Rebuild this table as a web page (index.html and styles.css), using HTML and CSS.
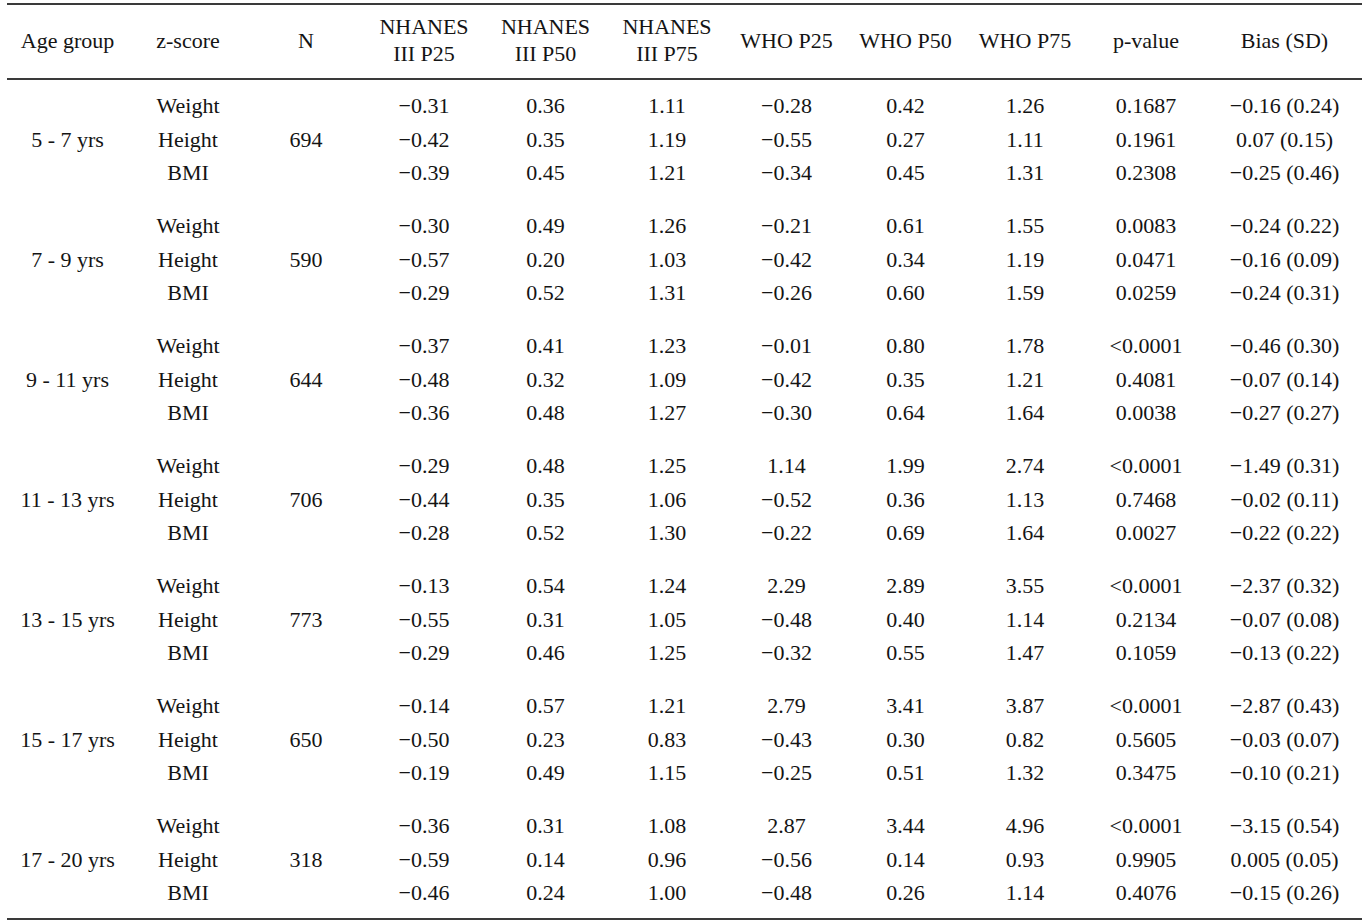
FILE: index.html
```html
<!DOCTYPE html>
<html>
<head>
<meta charset="utf-8">
<link rel="stylesheet" href="styles.css">
</head>
<body>
<table class="data">
<colgroup>
<col class="c1"><col class="c2"><col class="c3"><col class="c4"><col class="c5"><col class="c6"><col class="c7"><col class="c8"><col class="c9"><col class="c10"><col class="c11">
</colgroup>
<thead>
<tr>
<th>Age group</th><th>z-score</th><th>N</th><th>NHANES<br>III P25</th><th>NHANES<br>III P50</th><th>NHANES<br>III P75</th><th>WHO P25</th><th>WHO P50</th><th>WHO P75</th><th>p-value</th><th>Bias (SD)</th>
</tr>
</thead>
<tbody>
<tr class="first top"><td></td><td>Weight</td><td></td><td>−0.31</td><td>0.36</td><td>1.11</td><td>−0.28</td><td>0.42</td><td>1.26</td><td>0.1687</td><td>−0.16 (0.24)</td></tr>
<tr><td>5 - 7 yrs</td><td>Height</td><td>694</td><td>−0.42</td><td>0.35</td><td>1.19</td><td>−0.55</td><td>0.27</td><td>1.11</td><td>0.1961</td><td>0.07 (0.15)</td></tr>
<tr><td></td><td>BMI</td><td></td><td>−0.39</td><td>0.45</td><td>1.21</td><td>−0.34</td><td>0.45</td><td>1.31</td><td>0.2308</td><td>−0.25 (0.46)</td></tr>

<tr class="first"><td></td><td>Weight</td><td></td><td>−0.30</td><td>0.49</td><td>1.26</td><td>−0.21</td><td>0.61</td><td>1.55</td><td>0.0083</td><td>−0.24 (0.22)</td></tr>
<tr><td>7 - 9 yrs</td><td>Height</td><td>590</td><td>−0.57</td><td>0.20</td><td>1.03</td><td>−0.42</td><td>0.34</td><td>1.19</td><td>0.0471</td><td>−0.16 (0.09)</td></tr>
<tr><td></td><td>BMI</td><td></td><td>−0.29</td><td>0.52</td><td>1.31</td><td>−0.26</td><td>0.60</td><td>1.59</td><td>0.0259</td><td>−0.24 (0.31)</td></tr>

<tr class="first"><td></td><td>Weight</td><td></td><td>−0.37</td><td>0.41</td><td>1.23</td><td>−0.01</td><td>0.80</td><td>1.78</td><td>&lt;0.0001</td><td>−0.46 (0.30)</td></tr>
<tr><td>9 - 11 yrs</td><td>Height</td><td>644</td><td>−0.48</td><td>0.32</td><td>1.09</td><td>−0.42</td><td>0.35</td><td>1.21</td><td>0.4081</td><td>−0.07 (0.14)</td></tr>
<tr><td></td><td>BMI</td><td></td><td>−0.36</td><td>0.48</td><td>1.27</td><td>−0.30</td><td>0.64</td><td>1.64</td><td>0.0038</td><td>−0.27 (0.27)</td></tr>

<tr class="first"><td></td><td>Weight</td><td></td><td>−0.29</td><td>0.48</td><td>1.25</td><td>1.14</td><td>1.99</td><td>2.74</td><td>&lt;0.0001</td><td>−1.49 (0.31)</td></tr>
<tr><td>11 - 13 yrs</td><td>Height</td><td>706</td><td>−0.44</td><td>0.35</td><td>1.06</td><td>−0.52</td><td>0.36</td><td>1.13</td><td>0.7468</td><td>−0.02 (0.11)</td></tr>
<tr><td></td><td>BMI</td><td></td><td>−0.28</td><td>0.52</td><td>1.30</td><td>−0.22</td><td>0.69</td><td>1.64</td><td>0.0027</td><td>−0.22 (0.22)</td></tr>

<tr class="first"><td></td><td>Weight</td><td></td><td>−0.13</td><td>0.54</td><td>1.24</td><td>2.29</td><td>2.89</td><td>3.55</td><td>&lt;0.0001</td><td>−2.37 (0.32)</td></tr>
<tr><td>13 - 15 yrs</td><td>Height</td><td>773</td><td>−0.55</td><td>0.31</td><td>1.05</td><td>−0.48</td><td>0.40</td><td>1.14</td><td>0.2134</td><td>−0.07 (0.08)</td></tr>
<tr><td></td><td>BMI</td><td></td><td>−0.29</td><td>0.46</td><td>1.25</td><td>−0.32</td><td>0.55</td><td>1.47</td><td>0.1059</td><td>−0.13 (0.22)</td></tr>

<tr class="first"><td></td><td>Weight</td><td></td><td>−0.14</td><td>0.57</td><td>1.21</td><td>2.79</td><td>3.41</td><td>3.87</td><td>&lt;0.0001</td><td>−2.87 (0.43)</td></tr>
<tr><td>15 - 17 yrs</td><td>Height</td><td>650</td><td>−0.50</td><td>0.23</td><td>0.83</td><td>−0.43</td><td>0.30</td><td>0.82</td><td>0.5605</td><td>−0.03 (0.07)</td></tr>
<tr><td></td><td>BMI</td><td></td><td>−0.19</td><td>0.49</td><td>1.15</td><td>−0.25</td><td>0.51</td><td>1.32</td><td>0.3475</td><td>−0.10 (0.21)</td></tr>

<tr class="first"><td></td><td>Weight</td><td></td><td>−0.36</td><td>0.31</td><td>1.08</td><td>2.87</td><td>3.44</td><td>4.96</td><td>&lt;0.0001</td><td>−3.15 (0.54)</td></tr>
<tr><td>17 - 20 yrs</td><td>Height</td><td>318</td><td>−0.59</td><td>0.14</td><td>0.96</td><td>−0.56</td><td>0.14</td><td>0.93</td><td>0.9905</td><td>0.005 (0.05)</td></tr>
<tr class="last"><td></td><td>BMI</td><td></td><td>−0.46</td><td>0.24</td><td>1.00</td><td>−0.48</td><td>0.26</td><td>1.14</td><td>0.4076</td><td>−0.15 (0.26)</td></tr>
</tbody>
</table>
</body>
</html>
```

FILE: styles.css
```css
html, body {
  margin: 0;
  padding: 0;
  background: #ffffff;
}

body {
  padding: 3px 0 0 7px;
}

.data {
  border-collapse: collapse;
  table-layout: fixed;
  width: 1355px;
  font-family: "Liberation Serif", "Times New Roman", serif;
  font-size: 22px;
  color: #141414;
  border-top: 2px solid #3a3a3a;
  border-bottom: 2px solid #3a3a3a;
}

.c1 { width: 121px; }
.c2 { width: 120px; }
.c3 { width: 116px; }
.c4 { width: 120px; }
.c5 { width: 123px; }
.c6 { width: 120px; }
.c7 { width: 119px; }
.c8 { width: 119px; }
.c9 { width: 120px; }
.c10 { width: 122px; }
.c11 { width: 155px; }

.data th {
  font-weight: normal;
  text-align: center;
  vertical-align: middle;
  line-height: 27px;
  padding: 8px 0 11px;
  border-bottom: 2px solid #3a3a3a;
  white-space: nowrap;
}

.data td {
  text-align: center;
  line-height: 33.5px;
  padding: 0;
  white-space: nowrap;
}

.data tr.first td {
  padding-top: 19.5px;
}

.data tr.first.top td {
  padding-top: 9px;
}

.data tr.last td {
  padding-bottom: 8px;
}
```
